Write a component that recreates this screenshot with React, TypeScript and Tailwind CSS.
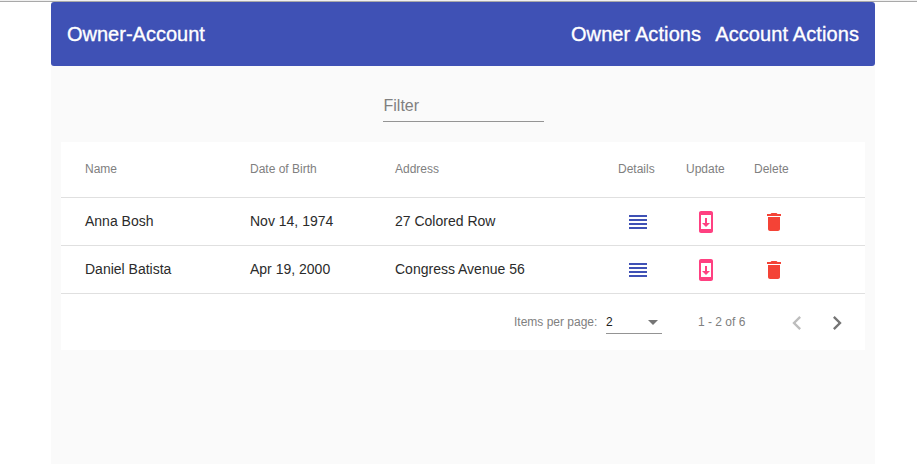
import React from 'react';

const owners = [
  { name: 'Anna Bosh', birth: 'Nov 14, 1974', address: '27 Colored Row' },
  { name: 'Daniel Batista', birth: 'Apr 19, 2000', address: 'Congress Avenue 56' },
];

function Icon({ path, className }: { path: string; className: string }) {
  return (
    <svg viewBox="0 0 24 24" className={`shrink-0 fill-current ${className}`}>
      <path d={path} />
    </svg>
  );
}

const reorder = 'M3 15h18v-2H3v2zm0 4h18v-2H3v2zm0-8h18V9H3v2zm0-6v2h18V5H3z';
const update =
  'M17 1.01L7 1c-1.1 0-2 .9-2 2v18c0 1.1.9 2 2 2h10c1.1 0 2-.9 2-2V3c0-1.1-.9-1.99-2-1.99zM17 19H7V5h10v14zm-1-6h-3V8h-2v5H8l4 4 4-4z';
const trash = 'M6 19c0 1.1.9 2 2 2h8c1.1 0 2-.9 2-2V7H6v12zM19 4h-3.5l-1-1h-5l-1 1H5v2h14V4z';
const columns = 'grid grid-cols-[165px_145px_223px_68px_68px_1fr] items-center border-b border-[#e0e0e0] pl-6';

export default function App() {
  return (
    <div className="h-[464px] overflow-hidden bg-white font-['Liberation_Sans',Arial,sans-serif]">
      <div className="h-0.5 border-b border-[#a9a9a9] bg-[#f0f0f0]" />
      <div className="ml-[51px] h-[462px] w-[824px] bg-[#fafafa]">
        <header className="flex h-16 items-center justify-between rounded-[3px] bg-[#3f51b5] px-4 text-xl text-white [-webkit-text-stroke:0.35px_white]">
          <span>Owner-Account</span>
          <nav className="flex gap-[14px] tracking-[0.1px]">
            <span>Owner Actions</span>
            <span>Account Actions</span>
          </nav>
        </header>
        <div className="mx-auto mt-[27px] h-[29px] w-[161px] border-b border-[#949494] pt-px pl-px text-base leading-6 text-[#808080]">
          Filter
        </div>
        <main className="mt-5 ml-2.5 h-52 w-[804px] bg-white">
          <div className={`${columns} h-14 pb-0.5 text-xs text-[#808080]`}>
            <span>Name</span>
            <span>Date of Birth</span>
            <span>Address</span>
            <span>Details</span>
            <span>Update</span>
            <span>Delete</span>
          </div>
          {owners.map((o) => (
            <div key={o.name} className={`${columns} h-12 text-sm text-[#2b2b2b]`}>
              <span className="pb-0.5">{o.name}</span>
              <span className="pb-0.5">{o.birth}</span>
              <span className="pb-0.5">{o.address}</span>
              <Icon path={reorder} className="ml-2 size-6 text-[#3f51b5]" />
              <Icon path={update} className="ml-2 size-6 text-[#ff4081]" />
              <Icon path={trash} className="ml-2 size-6 text-[#f44336]" />
            </div>
          ))}
          <footer className="flex h-14 items-center pl-[453px] text-xs text-[#808080]">
            <span className="w-[92px]">Items per page:</span>
            <div className="mt-0.5 flex h-[22px] w-14 items-center justify-between border-b border-[#949494] pr-1 text-[#212121]">
              <span className="pb-0.5">2</span>
              <span className="border-x-5 border-t-5 border-x-transparent border-t-[#757575]" />
            </div>
            <span className="ml-9 w-[85px]">1 - 2 of 6</span>
            <Icon path="M15.41 7.41L14 6l-6 6 6 6 1.41-1.41L10.83 12z" className="mt-0.5 size-7 text-[#bdbdbd]" />
            <Icon path="M10 6L8.59 7.41 13.17 12l-4.58 4.59L10 18l6-6z" className="mt-0.5 ml-3 size-7 text-[#757575]" />
          </footer>
        </main>
      </div>
    </div>
  );
}
